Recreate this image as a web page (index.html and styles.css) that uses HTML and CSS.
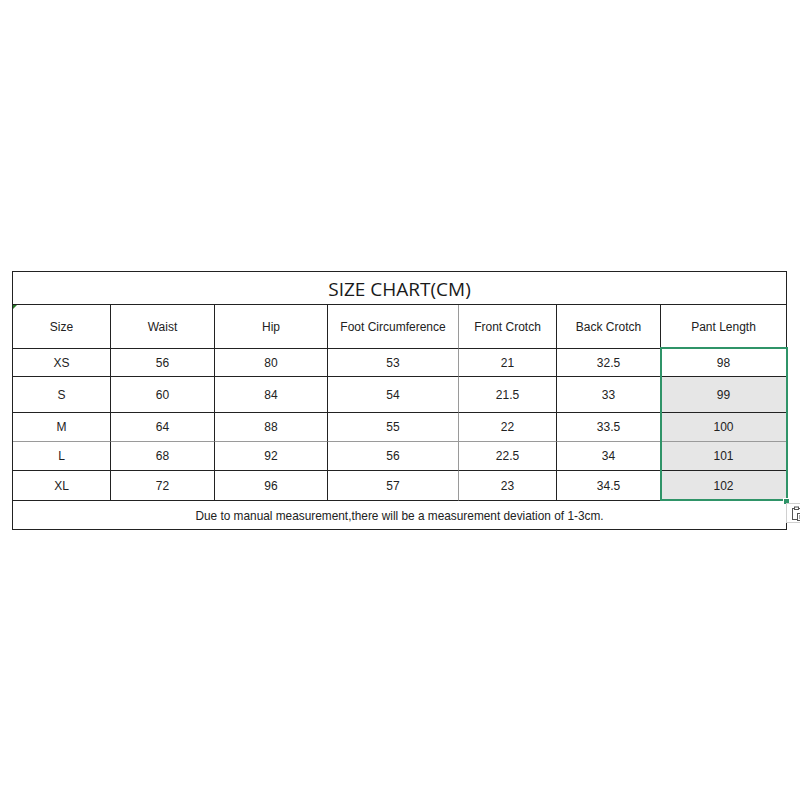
FILE: index.html
```html
<!DOCTYPE html>
<html>
<head>
<meta charset="utf-8">
<link rel="stylesheet" href="styles.css">
</head>
<body>
<div class="sheet">
  <div class="chart">
    <div class="cell title">SIZE CHART(CM)</div>

    <div class="cell head first">Size<span class="tri"></span></div>
    <div class="cell head">Waist</div>
    <div class="cell head">Hip</div>
    <div class="cell head gr">Foot Circumference</div>
    <div class="cell head">Front Crotch</div>
    <div class="cell head">Back Crotch</div>
    <div class="cell head">Pant Length</div>

    <div class="cell r-xs">XS</div><div class="cell r-xs">56</div><div class="cell r-xs">80</div><div class="cell r-xs gr">53</div><div class="cell r-xs">21</div><div class="cell r-xs">32.5</div><div class="cell r-xs">98</div>
    <div class="cell r-s">S</div><div class="cell r-s">60</div><div class="cell r-s">84</div><div class="cell r-s gr">54</div><div class="cell r-s">21.5</div><div class="cell r-s">33</div><div class="cell r-s sel">99</div>
    <div class="cell r-m gb">M</div><div class="cell r-m gb">64</div><div class="cell r-m gb">88</div><div class="cell r-m gb gr">55</div><div class="cell r-m gb">22</div><div class="cell r-m gb">33.5</div><div class="cell r-m gb sel">100</div>
    <div class="cell r-l">L</div><div class="cell r-l">68</div><div class="cell r-l">92</div><div class="cell r-l gr">56</div><div class="cell r-l">22.5</div><div class="cell r-l">34</div><div class="cell r-l sel">101</div>
    <div class="cell r-xl">XL</div><div class="cell r-xl">72</div><div class="cell r-xl">96</div><div class="cell r-xl gr">57</div><div class="cell r-xl">23</div><div class="cell r-xl">34.5</div><div class="cell r-xl sel">102</div>

    <div class="cell foot">Due to manual measurement,there will be a measurement deviation of 1-3cm.</div>
  </div>
  <div class="selection"></div>
  <div class="handle"></div>
  <div class="paste">
    <svg width="14" height="16" viewBox="0 0 14 16">
      <rect x="1.5" y="2.5" width="8" height="11" fill="none" stroke="#555" stroke-width="1"/>
      <rect x="3.5" y="1" width="4" height="2.5" fill="#fff" stroke="#555" stroke-width="1"/>
      <rect x="6.5" y="7.5" width="7" height="7" fill="#fff" stroke="#555" stroke-width="1"/>
      <line x1="8" y1="10" x2="12" y2="10" stroke="#555"/>
      <line x1="8" y1="12" x2="12" y2="12" stroke="#555"/>
    </svg>
  </div>
</div>
</body>
</html>
```

FILE: styles.css
```css
html, body {
  margin: 0;
  padding: 0;
  background: #fff;
}

body {
  width: 800px;
  height: 800px;
  overflow: hidden;
  font-family: "Liberation Sans", Arial, sans-serif;
  color: #222;
}

.sheet {
  position: relative;
  margin: 271px 0 0 12px;
  width: 775px;
}

.chart {
  display: grid;
  grid-template-columns: 98px 104px 113px 131px 98px 104px 126px;
  grid-template-rows: 33px 44px 28px 36px 29px 29px 30px 29px;
  border-top: 1px solid #222;
  border-left: 1px solid #222;
  width: 775px;
  box-sizing: border-box;
}

.cell {
  box-sizing: border-box;
  border-right: 1px solid #222;
  border-bottom: 1px solid #222;
  display: flex;
  align-items: center;
  justify-content: center;
  font-size: 12px;
  position: relative;
  white-space: nowrap;
}

.title {
  grid-column: 1 / -1;
  font-family: "Open Sans", "Noto Sans", sans-serif;
  font-size: 19px;
  color: #1a1a1a;
  padding-top: 1px;
}

.foot {
  grid-column: 1 / -1;
  padding-top: 1px;
  font-size: 11.85px;
}

.gr {
  border-right-color: #9a9a9a;
}

.gb {
  border-bottom-color: #9a9a9a;
}

.sel {
  background: #e6e6e6;
}

.tri {
  position: absolute;
  left: 0;
  top: 0;
  width: 0;
  height: 0;
  border-top: 4px solid #2a7a2a;
  border-right: 4px solid transparent;
}

.selection {
  position: absolute;
  left: 648px;
  top: 76px;
  width: 128px;
  height: 154px;
  box-sizing: border-box;
  border: 2px solid #2f9468;
}

.handle {
  position: absolute;
  left: 771px;
  top: 227px;
  width: 5px;
  height: 5px;
  background: #2f9468;
  border: 1px solid #fff;
}

.paste {
  position: absolute;
  left: 774px;
  top: 232px;
  width: 24px;
  height: 20px;
  box-sizing: border-box;
  border: 1px solid #d0d0d0;
  background: #fff;
  padding: 2px 0 0 4px;
}

.paste svg {
  display: block;
}
```
